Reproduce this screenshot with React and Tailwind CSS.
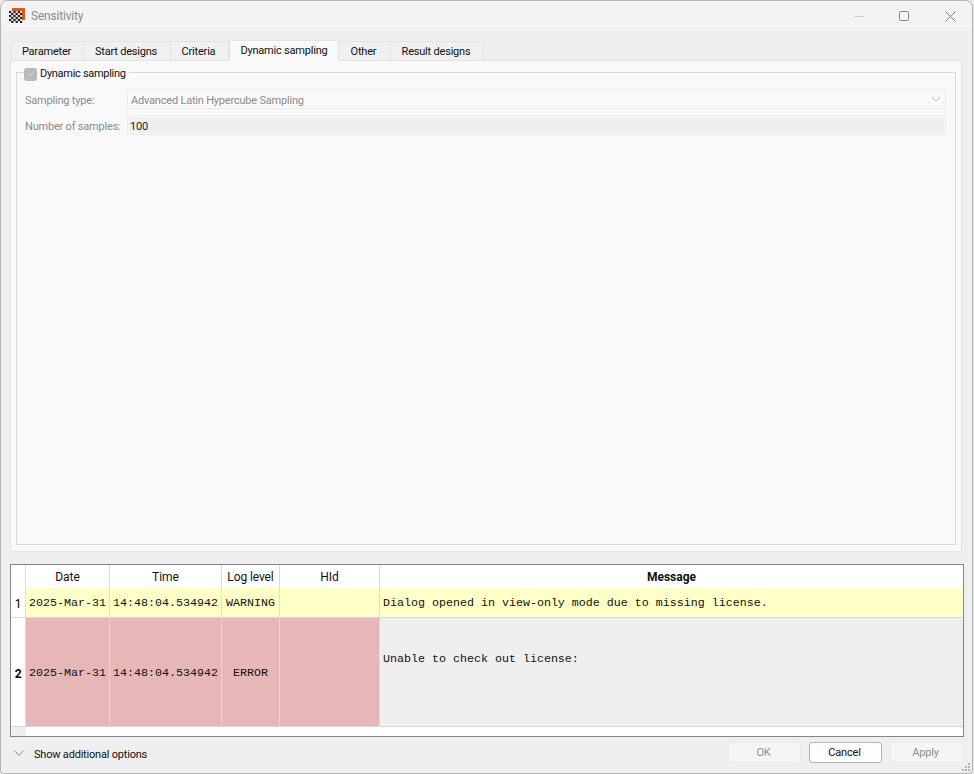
import React from 'react';
import { ChevronDown, Check } from 'lucide-react';

const uiFont = "font-['Roboto','Noto_Sans',sans-serif] tracking-[-0.2px]";
const monoFont = "font-['Liberation_Mono',monospace] tracking-normal";

const tabs = ['Parameter', 'Start designs', 'Criteria', 'Dynamic sampling', 'Other', 'Result designs'];
const tabWidths = { Parameter: 'w-[73px]', 'Start designs': 'w-[87px]', Criteria: 'w-[58px]', 'Dynamic sampling': 'w-[110px]', Other: 'w-[52px]', 'Result designs': 'w-[93px]' };

const AppIcon = () => (
  <svg width="16" height="16" viewBox="0 0 16 16" className="shrink-0">
    <rect x="3" y="0" width="13" height="12" fill="#e8590c" />
    <rect x="0" y="3" width="13" height="11" fill="#ddd" />
    {[0, 1, 2, 3, 4, 5].map((r) =>
      [0, 1, 2, 3, 4, 5].map((c) =>
        (r + c) % 2 === 0 ? <rect key={`${r}-${c}`} x={c * 2.2} y={3 + r * 2} width="2.2" height="2" fill="#222" /> : null
      )
    )}
  </svg>
);

const Tab = ({ label }) => {
  const active = label === 'Dynamic sampling';
  return (
    <div
      className={`${tabWidths[label]} flex items-center justify-center border-t border-r border-[#e3e3e3] text-[11px] text-[#111] ${
        active ? 'h-[21px] bg-[#f9f9f9] rounded-t-[2px] -mb-px z-10 border-l' : 'h-[19px] bg-[#f0f0f0] first:border-l pt-[2px] pr-[2px]'
      }`}
    >
      {label}
    </div>
  );
};

const FormRow = ({ label, children }) => (
  <div className="flex items-center h-[20px]">
    <span className="w-[102px] text-[11px] text-[#8a8a8a] whitespace-nowrap pt-[5px]">{label}</span>
    {children}
  </div>
);

const Cell = ({ className, children }) => (
  <div className={`flex items-center justify-center border-r border-[#dcdcdc] ${className}`}>{children}</div>
);

const LogRow = ({ index, bold, height, rowBg, msgBg, level, message, msgPad }) => (
  <div className={`flex ${height} border-b border-[#d6d6d6]`}>
    <div className={`w-[15px] flex items-center justify-center bg-white text-[12px] border-r border-[#dcdcdc] pt-[3px] ${bold ? 'font-bold' : ''}`}>{index}</div>
    <div className={`flex ${rowBg} ${monoFont} text-[11.67px] text-[#111]`}>
      <Cell className="w-[84px] pt-[3px]">2025-Mar-31</Cell>
      <Cell className="w-[112px] pt-[3px]">14:48:04.534942</Cell>
      <Cell className="w-[58px] pt-[3px]">{level}</Cell>
      <Cell className="w-[100px]" />
    </div>
    <div className={`flex-1 ${msgBg} ${monoFont} text-[11.67px] text-[#111] pl-[3px] flex items-center ${msgPad}`}>{message}</div>
  </div>
);

const FooterButton = ({ label, enabled }) => (
  <button
    className={`w-[73px] h-[21px] rounded-[3px] text-[11px] pt-[1px] pr-[2px] flex items-center justify-center ${
      enabled ? 'bg-[#fdfdfd] border border-[#b5b5b5] text-[#111]' : 'bg-[#f5f5f5] border border-[#eaeaea] text-[#8f8f8f]'
    }`}
  >
    {label}
  </button>
);

export default function App() {
  return (
    <div className={`w-[974px] h-[774px] bg-[#e8e8e8] ${uiFont} overflow-hidden`}>
      <div className="relative w-[973px] h-[774px] flex flex-col bg-[#efefef] border border-[#b4b4b4] rounded-t-[8px] rounded-b-[4px] overflow-hidden">
        {/* Title bar */}
        <div className="h-[30px] shrink-0 bg-[#f3f3f3] flex items-center pl-[8px] gap-[6px]">
          <AppIcon />
          <span className="text-[12px] text-[#8c8c8c]">Sensitivity</span>
          <div className="ml-auto flex items-center pr-[16px]">
            <svg width="10" height="10" viewBox="0 0 10 10" className="mr-[35px]"><path d="M0 5.5H10" stroke="#d0d0d0" /></svg>
            <svg width="10" height="10" viewBox="0 0 10 10" className="mr-[36px]"><rect x="0.5" y="0.5" width="9" height="9" rx="1" fill="none" stroke="#858585" /></svg>
            <svg width="11" height="11" viewBox="0 0 11 11"><path d="M0.5 0.5L10.5 10.5M10.5 0.5L0.5 10.5" stroke="#808080" fill="none" /></svg>
          </div>
        </div>

        {/* Tabs */}
        <div className="px-[9px] pt-[9px] shrink-0">
          <div className="flex items-end pl-[1px]">
            {tabs.map((t) => <Tab key={t} label={t} />)}
          </div>
          <div className="h-[492px] bg-[#f9f9f9] border border-[#e3e3e3] px-[5px] pt-[11px] pb-[6px] w-[952px]">
            <div className="relative h-full border border-[#d8d8d8] px-[8px] pt-[16px]">
              <div className="absolute -top-[7px] left-[7px] bg-[#f9f9f9] flex items-center gap-[3px] pr-[3px]">
                <span className="w-[13px] h-[13px] rounded-[3px] bg-[#b9b9b9] flex items-center justify-center">
                  <Check size={10} strokeWidth={1.5} className="text-[#f4f4f4]" />
                </span>
                <span className="text-[11px] text-[#111] tracking-[-0.3px]">Dynamic sampling</span>
              </div>
              <div className="flex flex-col gap-[6px]">
                <FormRow label="Sampling type:">
                  <div className="w-[819px] h-[20px] border border-[#ebebeb] bg-[#fafafa] flex items-center justify-between pl-[3px] pr-[2px]">
                    <span className="text-[11px] text-[#8a8a8a] pt-[5px]">Advanced Latin Hypercube Sampling</span>
                    <ChevronDown size={14} strokeWidth={1} className="text-[#777]" />
                  </div>
                </FormRow>
                <FormRow label="Number of samples:">
                  <div className="w-[819px] h-[20px] border border-[#ebebeb] p-[1px]">
                    <div className="h-full bg-[#efefef] flex items-center pl-[1px] pt-[5px] text-[11px] text-[#222]">100</div>
                  </div>
                </FormRow>
              </div>
            </div>
          </div>
        </div>

        {/* Log table */}
        <div className="mt-[12px] ml-[9px] w-[954px] h-[173px] shrink-0 border border-[#84848c] bg-white flex flex-col">
          <div className="flex h-[23px] text-[12px] tracking-normal text-[#111]">
            <div className="w-[15px] border-r border-[#dcdcdc]" />
            <Cell className="w-[84px] pt-[1px]">Date</Cell>
            <Cell className="w-[112px] pt-[1px]">Time</Cell>
            <Cell className="w-[58px] pt-[1px] tracking-[-0.1px]">Log level</Cell>
            <Cell className="w-[100px] pt-[1px]">HId</Cell>
            <div className="flex-1 flex items-center justify-center font-bold pt-[1px]">Message</div>
          </div>
          <LogRow index="1" height="h-[30px]" rowBg="bg-[#ffffc8]" msgBg="bg-[#ffffc8] pt-[2px]" level="WARNING" message="Dialog opened in view-only mode due to missing license." msgPad="" />
          <LogRow index="2" bold height="h-[109px]" rowBg="bg-[#e7b6b6]" msgBg="bg-[#efefef]" level="ERROR" message="Unable to check out license:" msgPad="pb-[25px]" />
          <div className="flex flex-1">
            <div className="w-[15px] bg-[#efefef]" />
          </div>
        </div>

        {/* Footer */}
        <div className="flex items-center justify-between pl-[3px] pr-[9px] mt-[5px] h-[21px] shrink-0">
          <div className="flex items-center">
            <span className="w-[30px] flex justify-center"><ChevronDown size={18} strokeWidth={1} className="text-[#666]" /></span>
            <span className="text-[11px] text-[#111] pt-[5px]">Show additional options</span>
          </div>
          <div className="flex gap-[8px]">
            <FooterButton label="OK" />
            <FooterButton label="Cancel" enabled />
            <FooterButton label="Apply" />
          </div>
        </div>

        {/* Resize grip */}
        <svg width="10" height="10" viewBox="0 0 10 10" className="absolute right-[1px] bottom-[1px]">
          <g fill="#b8b8b8">
            <rect x="7" y="1" width="2" height="2" />
            <rect x="4" y="4" width="2" height="2" />
            <rect x="7" y="4" width="2" height="2" />
            <rect x="1" y="7" width="2" height="2" />
            <rect x="4" y="7" width="2" height="2" />
            <rect x="7" y="7" width="2" height="2" />
          </g>
        </svg>
      </div>
    </div>
  );
}
